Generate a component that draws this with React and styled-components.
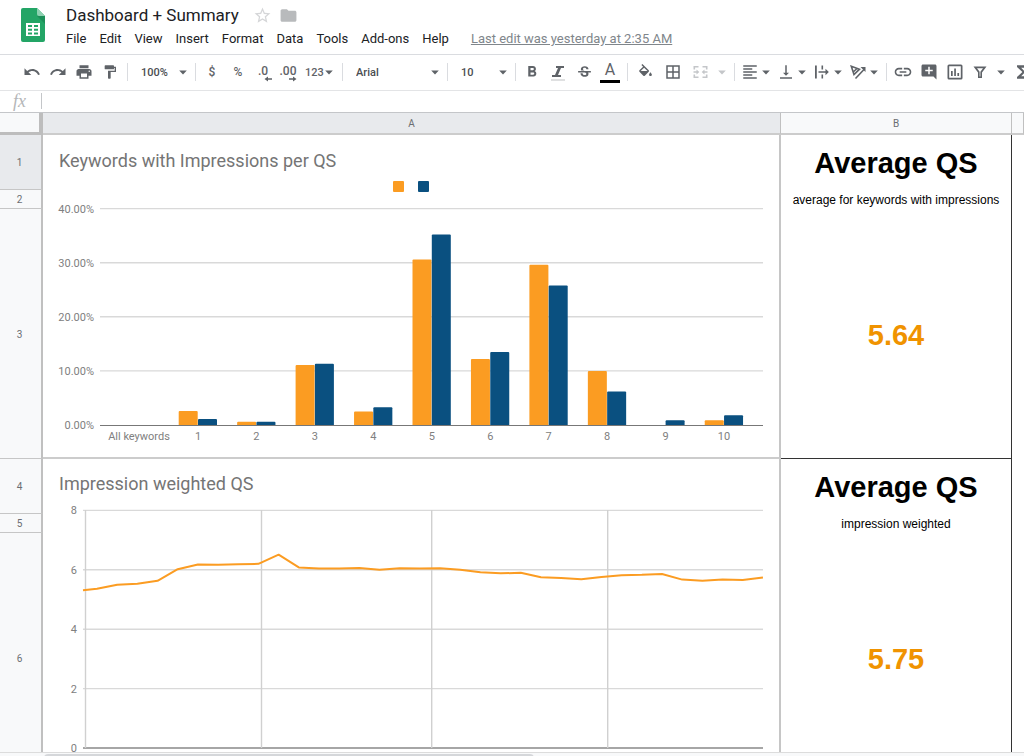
import React, { useState } from "react";
import styled, { createGlobalStyle } from "styled-components";
import {
  MdUndo,
  MdRedo,
  MdPrint,
  MdFormatPaint,
  MdFormatBold,
  MdStrikethroughS,
  MdBorderAll,
  MdFormatAlignLeft,
  MdVerticalAlignBottom,
  MdLink,
  MdAddComment,
  MdFunctions,
  MdStarBorder,
  MdFolder,
} from "react-icons/md";

const GlobalStyle = createGlobalStyle`
  * {
    box-sizing: border-box;
  }

  body {
    margin: 0;
    background: #fff;
    font-family: Roboto, "Liberation Sans", sans-serif;
    overflow: hidden;
  }

  button, select, input {
    margin: 0;
    padding: 0;
    border: 0;
    background: transparent;
    font-family: inherit;
    outline: none;
  }
`;

const Page = styled("div")`
  display: flex;
  flex-direction: column;
  height: 100vh;
`;

/* Header */

const Header = styled("header")`
  display: flex;
  flex: none;
  align-items: flex-start;
  padding: 4px 20px 2px;
  border-bottom: 1px solid #dadce0;
`;

const LogoLink = styled("a")`
  display: block;
  padding-top: 4px;
  line-height: 0;
`;

const HeaderBody = styled("div")`
  flex: 1;
  padding-left: 15px;
`;

const TitleRow = styled("div")`
  display: flex;
  align-items: center;
  height: 22px;
  padding-left: 5px;
`;

const Title = styled("h1")`
  margin: 0 14px 0 0;
  font-size: 17px;
  line-height: 22px;
  font-weight: 400;
  color: #202124;
`;

const TitleButton = styled("button")`
  display: flex;
  margin-right: 7px;
  font-size: 19px;
  color: ${(props) => props.$color};
`;

const MenuBar = styled("nav")`
  display: flex;
  align-items: center;
  height: 26px;
`;

const MenuItem = styled("button")`
  margin-right: 3px;
  padding: 0 5px;
  font-size: 13px;
  line-height: 26px;
  color: #202124;
  white-space: nowrap;
`;

const LastEdit = styled("a")`
  margin-left: 14px;
  font-size: 13px;
  line-height: 26px;
  color: #80868b;
  text-decoration: underline;
  white-space: nowrap;
`;

/* Toolbar */

const ToolbarRow = styled("div")`
  display: flex;
  flex: none;
  align-items: center;
  height: 36px;
  padding: 0 0 1px 19px;
  overflow: hidden;
  border-bottom: 1px solid #e3e4e6;
`;

const ToolButton = styled("button")`
  display: flex;
  flex: none;
  flex-direction: column;
  align-items: center;
  justify-content: center;
  width: ${(props) => props.$width || 26}px;
  height: 26px;
  font-size: 18px;
  color: #5f6368;
`;

const TextButton = styled(ToolButton)`
  flex-direction: row;
  font-size: ${(props) => (props.$small ? 11 : 12)}px;
  font-weight: 500;
`;

const SplitButton = styled(ToolButton)`
  flex-direction: row;
  justify-content: space-between;
  padding: 0 3px;
  color: ${(props) => (props.$muted ? "#c4c6c9" : "#5f6368")};
`;

const Divider = styled("span")`
  flex: none;
  width: 1px;
  height: 18px;
  margin: 0 3px 0 4px;
  background: #dadce0;
`;

const ColorBar = styled("span")`
  width: 20px;
  height: 3px;
  background: #000;
`;

const LetterA = styled("span")`
  font-size: 16px;
  line-height: 18px;
  height: 19px;
`;

const SelectLabel = styled("label")`
  display: flex;
  flex: none;
  align-items: center;
  width: ${(props) => props.$width}px;
  height: 26px;
  padding: 0 3px 0 10px;
  color: #5f6368;
`;

const SelectBox = styled("select")`
  flex: 1;
  min-width: 0;
  appearance: none;
  font-size: 11px;
  font-weight: 500;
  color: #4a4d51;
`;

/* Formula bar */

const FormulaBar = styled("label")`
  display: flex;
  flex: none;
  align-items: center;
  height: 22px;
  padding: 0 0 1px 13px;
  border-bottom: 1px solid #c4c6c9;
`;

const Fx = styled("span")`
  width: 28px;
  font-family: "Liberation Serif", serif;
  font-size: 18px;
  line-height: 18px;
  font-style: italic;
  color: #b4b6b8;
`;

const FormulaInput = styled("input")`
  flex: 1;
  height: 16px;
  padding: 0 8px;
  border-left: 1px solid #c4c6c9;
  font-size: 12px;
`;

/* Sheet */

const SheetArea = styled("main")`
  flex: 1;
  min-height: 0;
  overflow: hidden;
`;

const Sheet = styled("table")`
  width: 100%;
  table-layout: fixed;
  border-collapse: separate;
  border-spacing: 0;
`;

const Corner = styled("td")`
  height: 22px;
  padding: 0;
  background: #f8f9fa;
  border-right: 4px solid #bdbdbd;
  border-bottom: 3px solid #bdbdbd;
`;

const ColumnHead = styled("th")`
  padding: 2px 0 0;
  border-right: 1px solid #c0c0c0;
  border-bottom: 2px solid #cccccc;
  background: ${(props) => (props.$active ? "#e8eaed" : "#f8f9fa")};
  font-size: 10px;
  line-height: 12px;
  font-weight: 400;
  color: #6b6e72;
`;

const Row = styled("tr")`
  height: ${(props) => props.$height}px;
`;

const RowHead = styled("th")`
  padding: 2px 2px 0 0;
  border-right: 2px solid #c0c0c0;
  border-bottom: 1px solid #c6c6c6;
  background: ${(props) => (props.$active ? "#e8eaed" : "#f8f9fa")};
  font-size: 10px;
  line-height: 12px;
  font-weight: 400;
  color: #6b6e72;
`;

const ChartCell = styled("td")`
  padding: 0;
  vertical-align: top;
  border-right: 2px solid #c6c6c6;
  border-bottom: 2px solid #cccccc;
`;

const SummaryCell = styled("td")`
  padding: ${(props) => (props.$accent ? 2 : 0)}px 0 0;
  overflow: hidden;
  border-right: 1px solid #333;
  border-bottom: ${(props) => (props.$accent ? "1px solid #333" : "0")};
  font-family: "Liberation Sans", Arial, sans-serif;
  font-size: ${(props) => (props.$big ? 29 : 12)}px;
  line-height: ${(props) => (props.$big ? 32 : 16)}px;
  font-weight: ${(props) => (props.$big ? 700 : 400)};
  color: ${(props) => (props.$accent ? "#f09300" : "#000")};
  text-align: center;
  white-space: nowrap;
`;

const BlankCell = styled("td")`
  padding: 0;
`;

const ScrollTrack = styled("div")`
  flex: none;
  height: 4px;
  padding: 1px 0 0 44px;
  overflow: hidden;
  border-top: 1px solid #dcdcdc;
  background: #f8f9fa;
`;

const ScrollThumb = styled("div")`
  width: 50%;
  height: 8px;
  border-radius: 4px;
  background: #d5d7da;
`;

/* Charts */

const ChartSvg = styled("svg")`
  display: block;
  width: 100%;
  height: auto;
  font-family: Roboto, sans-serif;
`;

const ChartTitle = styled("text")`
  font-size: 18px;
  fill: #757575;
`;

const AxisLabel = styled("text")`
  font-size: 11px;
  fill: #808080;
`;

const ORANGE = "#fb9c22";
const BLUE = "#0a5080";

const keywordRows = [
  ["1", 2.6, 1.1],
  ["2", 0.6, 0.6],
  ["3", 11.1, 11.3],
  ["4", 2.5, 3.3],
  ["5", 30.6, 35.2],
  ["6", 12.2, 13.5],
  ["7", 29.6, 25.8],
  ["8", 10, 6.2],
  ["9", 0, 0.9],
  ["10", 0.9, 1.8],
];

const weightedScores = [
  5.36, 5.5, 5.53, 5.63, 6.02, 6.18, 6.17, 6.19, 6.2, 6.51, 6.08, 6.04, 6.04,
  6.06, 6.0, 6.05, 6.04, 6.05, 6.0, 5.92, 5.88, 5.9, 5.75, 5.72, 5.68, 5.76,
  5.82, 5.83, 5.86, 5.67, 5.63, 5.67, 5.66, 5.74,
];

const bar = (x, top, base) =>
  `M${x} ${base}V${top + 1}q0 -1 1 -1h17q1 0 1 1V${base}z`;

const KeywordsChart = () => {
  const y = (value) => 290 - value * 5.41;
  return (
    <ChartSvg viewBox="0 0 736 321" role="img" aria-label="Keywords chart">
      <ChartTitle x="16" y="32">
        Keywords with Impressions per QS
      </ChartTitle>
      <rect x="350" y="46" width="11" height="11" rx="1" fill={ORANGE} />
      <rect x="375" y="46" width="11" height="11" rx="1" fill={BLUE} />
      {[40, 30, 20, 10, 0].map((tick) => (
        <g key={tick}>
          {tick > 0 && (
            <path d={`M57 ${y(tick)}H720`} stroke="#d9d9d9" strokeWidth="1.4" />
          )}
          <AxisLabel x="51" y={y(tick) + 4} textAnchor="end">
            {tick.toFixed(2)}%
          </AxisLabel>
        </g>
      ))}
      <AxisLabel x="96" y="305" textAnchor="middle">
        All keywords
      </AxisLabel>
      {keywordRows.map(([label, keywords, impressions], i) => {
        const center = 155 + i * 58.45;
        return (
          <g key={label}>
            {keywords > 0 && (
              <path d={bar(center - 19.3, y(keywords), 290)} fill={ORANGE} />
            )}
            <path d={bar(center, y(impressions), 290)} fill={BLUE} />
            <AxisLabel x={center} y="305" textAnchor="middle">
              {label}
            </AxisLabel>
          </g>
        );
      })}
      <path d="M57 290.5H720" stroke="#777" strokeWidth="1.2" />
    </ChartSvg>
  );
};

const WeightedChart = () => {
  const y = (value) => 289 - value * 29.7;
  const points = weightedScores.map(
    (score, i) => `${54 + i * 20.18},${y(score)}`
  );
  return (
    <ChartSvg viewBox="0 0 736 320" role="img" aria-label="Weighted QS chart">
      <ChartTitle x="16" y="31">
        Impression weighted QS
      </ChartTitle>
      {[8, 6, 4, 2, 0].map((tick) => (
        <g key={tick}>
          <path
            d={`M40 ${y(tick)}H720`}
            stroke={tick ? "#d9d9d9" : "#888"}
            strokeWidth="1.4"
          />
          <AxisLabel x="34" y={y(tick) + 4} textAnchor="end">
            {tick}
          </AxisLabel>
        </g>
      ))}
      {[42.5, 218.5, 388.7, 564.7].map((x) => (
        <path key={x} d={`M${x} 51V289`} stroke="#d0d0d0" strokeWidth="1.4" />
      ))}
      <polyline
        points={`40,${y(5.31)} ${points.join(" ")}`}
        fill="none"
        stroke={ORANGE}
        strokeWidth="2"
        strokeLinejoin="round"
      />
    </ChartSvg>
  );
};

/* Icons */

const SheetsLogo = () => (
  <svg width="26" height="35" viewBox="0 0 26 35">
    <path
      d="M3 0h14l8 8v24a2 2 0 0 1-2 2H3a2 2 0 0 1-2-2V2a2 2 0 0 1 2-2z"
      fill="#23a566"
    />
    <path d="M17 8h8v8z" fill="#1c8f58" />
    <path d="M17 0l8 8h-6a2 2 0 0 1-2-2z" fill="#8ed1b1" />
    <path
      d="M6 15h14v13H6zM8 17v2h4v-2zm6 0v2h4v-2zm-6 3.700v2h4v-2zm6 0v2h4v-2zm-6 3.700v2h4v-2zm6 0v2h4v-2z"
      fill="#fff"
      fillRule="evenodd"
    />
  </svg>
);

const DecimalIcon = ({ text, more }) => (
  <svg width="20" height="20" viewBox="0 0 20 20" fill="currentColor">
    <text x="9" y="13" fontSize="12" fontWeight="500" textAnchor="middle">
      {text}
    </text>
    <path
      d={
        more
          ? "M10 16.300h4v-1.800l3.500 2.500-3.500 2.500v-1.800h-4z"
          : "M18 16.300h-4v-1.800l-3.500 2.500 3.500 2.500v-1.800h4z"
      }
    />
  </svg>
);

const FillIcon = () => (
  <svg width="17" height="17" viewBox="0 0 24 24" fill="currentColor">
    <path d="M16.560 8.940L7.620 0 6.210 1.410l2.380 2.380-5.150 5.150c-.59.59-.59 1.540 0 2.120l5.500 5.500c.29.29.68.44 1.060.44s.77-.15 1.060-.44l5.500-5.500c.59-.58.59-1.530 0-2.120zM5.210 10L10 5.210 14.790 10H5.210zM19 11.500s-2 2.170-2 3.500c0 1.100.9 2 2 2s2-.9 2-2c0-1.330-2-3.500-2-3.500z" />
  </svg>
);

const MergeIcon = () => (
  <svg width="20" height="18" viewBox="-1 0 19 18" fill="currentColor">
    <path d="M2 3h5v1.600H3.600V6.500H2zM16 3h-5v1.600h3.400v1.900H16zM2 15h5v-1.600H3.600v-1.900H2zM16 15h-5v-1.600h3.400v-1.900H16zM2 8.200h3V6.500L7.800 9 5 11.500V9.800H2zM16 8.200h-3V6.500L10.200 9l2.800 2.500V9.800h3z" />
  </svg>
);

const WrapIcon = () => (
  <svg width="18" height="18" viewBox="0 0 18 18" fill="currentColor">
    <path d="M2 2.500h1.800v13H2zM8.500 2.500h1.600v4H8.500zM8.500 11.500h1.600v4H8.500zM5.500 8.200h7V5.800L15.800 9l-3.300 3.200V9.800h-7z" />
  </svg>
);

const RotateIcon = () => (
  <svg
    width="18"
    height="18"
    viewBox="0 0 18 18"
    fill="none"
    stroke="currentColor"
    strokeWidth="1.600"
  >
    <path d="M2.300 3.200L10.500 6.200 5 11.500zM8 5.500L4.200 9" />
    <path d="M6.500 15.500L15 6.500" />
    <path d="M11.500 4h5v5z" fill="currentColor" stroke="none" />
  </svg>
);

const ChartIcon = () => (
  <svg width="18" height="18" viewBox="0 0 18 18" fill="currentColor">
    <path
      d="M3 1.500h12a1.500 1.500 0 0 1 1.500 1.500v12a1.500 1.500 0 0 1-1.500 1.500H3A1.500 1.500 0 0 1 1.500 15V3A1.500 1.500 0 0 1 3 1.500zM3.200 3.200v11.600h11.600V3.200z"
      fillRule="evenodd"
    />
    <path d="M5 8h1.700v5H5zM8.200 5.500h1.700V13H8.200zM11.400 10h1.700v3h-1.700z" />
  </svg>
);

const FilterIcon = () => (
  <svg width="18" height="18" viewBox="0 0 18 18" fill="currentColor">
    <path
      d="M2.500 3.500h13L11 9.500V15H7V9.500zM6 5.200L8.600 8.800v4.600h.8V8.800L12 5.200z"
      fillRule="evenodd"
    />
  </svg>
);

const ItalicIcon = () => (
  <svg width="18" height="20" viewBox="0 0 18 20" fill="currentColor">
    <path d="M7 4h8v2h-3l-3 7h3v2H3v-2h3l3-7H7z" />
    <path d="M2 17.500h14v1H2z" opacity="0.400" />
  </svg>
);

const Arrow = () => (
  <svg width="10" height="10" viewBox="0 0 10 10" fill="currentColor">
    <path d="M1.200 3.500h7.600L5 7.500z" />
  </svg>
);

const menus = [
  "File",
  "Edit",
  "View",
  "Insert",
  "Format",
  "Data",
  "Tools",
  "Add-ons",
  "Help",
];

const ToolSelect = ({ label, width, options }) => {
  const [value, setValue] = useState(options[0]);
  return (
    <SelectLabel $width={width}>
      <SelectBox
        aria-label={label}
        value={value}
        onChange={(e) => setValue(e.target.value)}
      >
        {options.map((option) => (
          <option key={option}>{option}</option>
        ))}
      </SelectBox>
      <Arrow />
    </SelectLabel>
  );
};

const Toolbar = () => (
  <ToolbarRow>
    <ToolButton aria-label="Undo">
      <MdUndo />
    </ToolButton>
    <ToolButton aria-label="Redo">
      <MdRedo />
    </ToolButton>
    <ToolButton aria-label="Print">
      <MdPrint />
    </ToolButton>
    <ToolButton aria-label="Paint format">
      <MdFormatPaint size={16} />
    </ToolButton>
    <Divider />
    <ToolSelect label="Zoom" width={60} options={["100%", "75%", "50%"]} />
    <Divider />
    <TextButton>$</TextButton>
    <TextButton>%</TextButton>
    <TextButton $width={25} aria-label="Decrease decimal places">
      <DecimalIcon text=".0" />
    </TextButton>
    <TextButton $width={25} aria-label="Increase decimal places">
      <DecimalIcon text=".00" more />
    </TextButton>
    <TextButton $width={37} $small aria-label="More formats">
      123
      <Arrow />
    </TextButton>
    <Divider />
    <ToolSelect label="Font" width={97} options={["Arial", "Roboto"]} />
    <Divider />
    <ToolSelect label="Font size" width={60} options={["10", "11", "12"]} />
    <Divider />
    <ToolButton aria-label="Bold">
      <MdFormatBold />
    </ToolButton>
    <ToolButton aria-label="Italic">
      <ItalicIcon />
    </ToolButton>
    <ToolButton aria-label="Strikethrough">
      <MdStrikethroughS size={17} />
    </ToolButton>
    <ToolButton aria-label="Text color">
      <LetterA>A</LetterA>
      <ColorBar />
    </ToolButton>
    <Divider />
    <ToolButton $width={28} aria-label="Fill color">
      <FillIcon />
    </ToolButton>
    <ToolButton $width={28} aria-label="Borders">
      <MdBorderAll />
    </ToolButton>
    <SplitButton $width={43} $muted disabled aria-label="Merge cells">
      <MergeIcon />
      <Arrow />
    </SplitButton>
    <Divider />
    <SplitButton $width={36} aria-label="Horizontal align">
      <MdFormatAlignLeft />
      <Arrow />
    </SplitButton>
    <SplitButton $width={36} aria-label="Vertical align">
      <MdVerticalAlignBottom />
      <Arrow />
    </SplitButton>
    <SplitButton $width={36} aria-label="Text wrapping">
      <WrapIcon />
      <Arrow />
    </SplitButton>
    <SplitButton $width={36} aria-label="Text rotation">
      <RotateIcon />
      <Arrow />
    </SplitButton>
    <Divider />
    <ToolButton aria-label="Insert link">
      <MdLink size={20} />
    </ToolButton>
    <ToolButton aria-label="Insert comment">
      <MdAddComment />
    </ToolButton>
    <ToolButton aria-label="Insert chart">
      <ChartIcon />
    </ToolButton>
    <SplitButton $width={41} aria-label="Filter">
      <FilterIcon />
      <Arrow />
    </SplitButton>
    <ToolButton aria-label="Functions">
      <MdFunctions size={20} />
    </ToolButton>
  </ToolbarRow>
);

const App = () => {
  const [formula, setFormula] = useState("");
  return (
    <>
      <GlobalStyle />
      <Page>
        <Header>
          <LogoLink href="#" aria-label="Sheets home">
            <SheetsLogo />
          </LogoLink>
          <HeaderBody>
            <TitleRow>
              <Title>Dashboard + Summary</Title>
              <TitleButton $color="#d5d6d8" aria-label="Star">
                <MdStarBorder />
              </TitleButton>
              <TitleButton $color="#b8babc" aria-label="Move to folder">
                <MdFolder />
              </TitleButton>
            </TitleRow>
            <MenuBar>
              {menus.map((menu) => (
                <MenuItem key={menu}>{menu}</MenuItem>
              ))}
              <LastEdit href="#">Last edit was yesterday at 2:35 AM</LastEdit>
            </MenuBar>
          </HeaderBody>
        </Header>
        <Toolbar />
        <FormulaBar>
          <Fx>fx</Fx>
          <FormulaInput
            aria-label="Formula"
            value={formula}
            onChange={(e) => setFormula(e.target.value)}
          />
        </FormulaBar>
        <SheetArea>
          <Sheet>
            <colgroup>
              <col width="43" />
              <col />
              <col width="231" />
              <col width="12" />
            </colgroup>
            <thead>
              <tr>
                <Corner />
                <ColumnHead $active>A</ColumnHead>
                <ColumnHead>B</ColumnHead>
                <ColumnHead />
              </tr>
            </thead>
            <tbody>
              <Row $height={55}>
                <RowHead $active>1</RowHead>
                <ChartCell rowSpan={3}>
                  <KeywordsChart />
                </ChartCell>
                <SummaryCell $big>Average QS</SummaryCell>
                <BlankCell />
              </Row>
              <Row $height={19}>
                <RowHead>2</RowHead>
                <SummaryCell>average for keywords with impressions</SummaryCell>
                <BlankCell />
              </Row>
              <Row $height={250}>
                <RowHead>3</RowHead>
                <SummaryCell $big $accent>
                  5.64
                </SummaryCell>
                <BlankCell />
              </Row>
              <Row $height={55}>
                <RowHead>4</RowHead>
                <ChartCell rowSpan={3}>
                  <WeightedChart />
                </ChartCell>
                <SummaryCell $big>Average QS</SummaryCell>
                <BlankCell />
              </Row>
              <Row $height={19}>
                <RowHead>5</RowHead>
                <SummaryCell>impression weighted</SummaryCell>
                <BlankCell />
              </Row>
              <Row $height={250}>
                <RowHead>6</RowHead>
                <SummaryCell $big $accent>
                  5.75
                </SummaryCell>
                <BlankCell />
              </Row>
            </tbody>
          </Sheet>
        </SheetArea>
        <ScrollTrack>
          <ScrollThumb />
        </ScrollTrack>
      </Page>
    </>
  );
};

export default App;
